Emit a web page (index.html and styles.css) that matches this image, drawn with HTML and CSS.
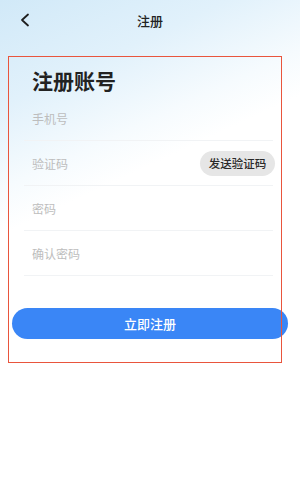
FILE: index.html
```html
<!DOCTYPE html>
<html lang="zh">
<head>
<meta charset="utf-8">
<link rel="stylesheet" href="styles.css">
</head>
<body>
<div class="page">
  <header class="nav">
    <span class="back">
      <svg width="12" height="14" viewBox="0 0 12 14"><path d="M9 1.5 L3 7 L9 12.5" fill="none" stroke="#1e1e1e" stroke-width="1.8" stroke-linecap="round" stroke-linejoin="round"/></svg>
    </span>
    <span class="nav-title">注册</span>
  </header>
  <section class="form">
    <h1 class="title">注册账号</h1>
    <div class="row"><span class="ph">手机号</span></div>
    <div class="row"><span class="ph">验证码</span><span class="code-btn">发送验证码</span></div>
    <div class="row"><span class="ph">密码</span></div>
    <div class="row"><span class="ph">确认密码</span></div>
    <div class="submit">立即注册</div>
  </section>
</div>
</body>
</html>
```
FILE: styles.css
```css
html, body {
  margin: 0;
  padding: 0;
}
body {
  font-family: "Noto Sans CJK SC", "Noto Sans", sans-serif;
  background-color: #fff;
  background-image: linear-gradient(155deg, #d1e9f8 0%, #e1f1fb 28%, #f6fbfe 50%, #ffffff 62%);
  background-size: 100% 240px;
  background-repeat: no-repeat;
  width: 300px;
  height: 500px;
}
.page {
  width: 300px;
}
.nav {
  height: 40px;
  display: flex;
  align-items: center;
  justify-content: center;
  position: relative;
}
.back {
  position: absolute;
  left: 19px;
  top: 13px;
  display: flex;
}
.nav-title {
  font-size: 13px;
  font-weight: 500;
  color: #222;
}
.form {
  margin: 16px 0 0 8px;
  width: 274px;
  height: 307px;
  box-sizing: border-box;
  outline: 1px solid #e9553d;
  outline-offset: -1px;
  padding-top: 11px;
  display: flex;
  flex-direction: column;
}
.title {
  margin: 0 0 3px 24px;
  font-size: 21px;
  line-height: 26px;
  font-weight: 700;
  color: #222;
}
.row {
  margin-left: 16px;
  height: 44px;
  border-bottom: 1px solid #f1f3f5;
  display: flex;
  align-items: center;
  justify-content: space-between;
  padding-left: 8px;
  box-sizing: content-box;
  width: 241px;
}
.ph {
  font-size: 12px;
  color: #bdbdbd;
}
.code-btn {
  margin-right: -2px;
  width: 75px;
  height: 25px;
  border-radius: 13px;
  background: #e6e6e6;
  color: #2a2a2a;
  font-size: 11.5px;
  font-weight: 500;
  display: flex;
  align-items: center;
  justify-content: center;
}
.submit {
  margin: 32px 0 0 4px;
  width: 276px;
  height: 31px;
  flex-shrink: 0;
  border-radius: 16px;
  background: #3a86f6;
  color: #fff;
  font-size: 13px;
  font-weight: 500;
  display: flex;
  align-items: center;
  justify-content: center;
}
```
